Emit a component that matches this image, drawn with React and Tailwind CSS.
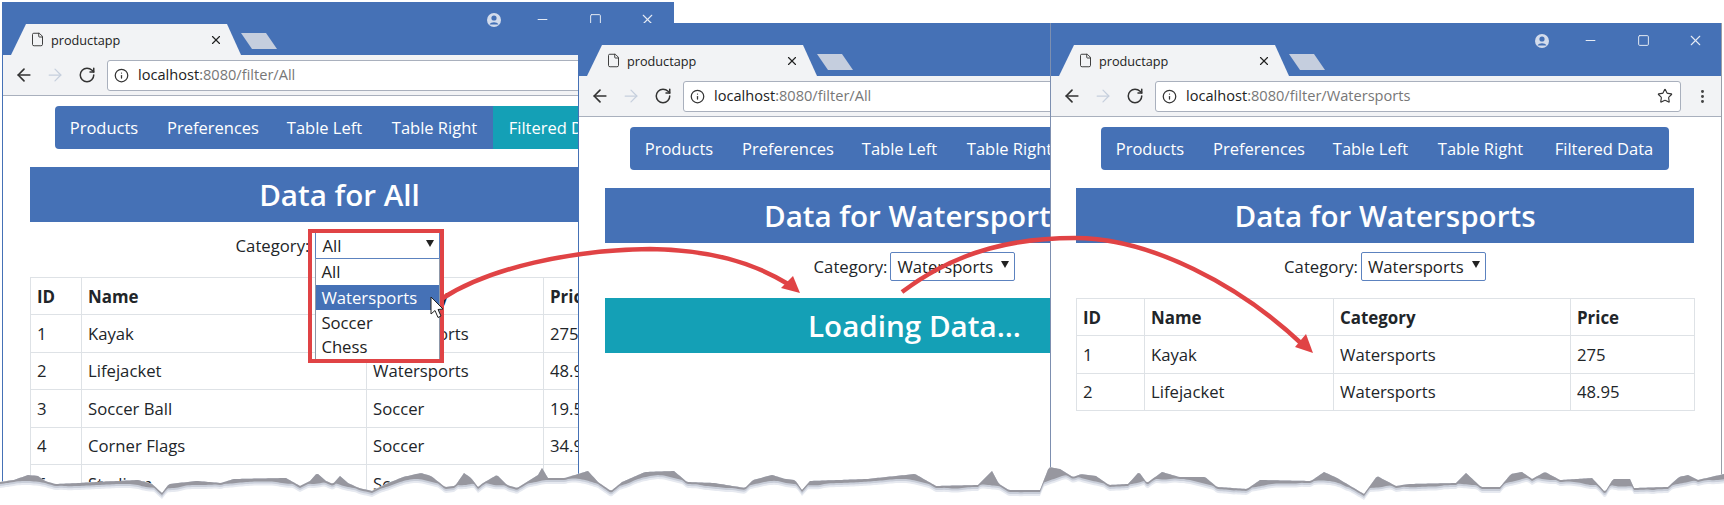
import { ArrowLeft, ArrowRight, RotateCw, Info, Star, File, X, Minus, Square, MoreVertical } from 'lucide-react';

const navItems = [
    { label: 'Products', width: 'w-[98px]' },
    { label: 'Preferences', width: 'w-[120px]' },
    { label: 'Table Left', width: 'w-[103px]' },
    { label: 'Table Right', width: 'w-[117px]' },
    { label: 'Filtered Data', width: 'w-[130px]' }
];

const rows = [
    ['1', 'Kayak', 'Watersports', '275'],
    ['2', 'Lifejacket', 'Watersports', '48.95'],
    ['3', 'Soccer Ball', 'Soccer', '19.50'],
    ['4', 'Corner Flags', 'Soccer', '34.95'],
    ['5', 'Stadium', 'Soccer', '79500']
];

// top edge of the torn paper, traced from the picture
const tearPoints = [
    [0, 482], [14, 480], [28, 475], [38, 476], [45, 481], [55, 484], [79, 483], [97, 482], [138, 480], [152, 484],
    [162, 493], [169, 484], [197, 481], [221, 483], [234, 479], [286, 478], [300, 486], [310, 481], [317, 473],
    [326, 481], [333, 484], [340, 476], [348, 483], [359, 488], [372, 491], [386, 484], [403, 477], [421, 473],
    [431, 476], [445, 487], [455, 486], [464, 473], [471, 478], [478, 487], [483, 483], [497, 475], [507, 485],
    [517, 488], [538, 475], [542, 468], [548, 478], [565, 478], [588, 471], [598, 482], [611, 491], [622, 482],
    [645, 472], [674, 471], [687, 482], [714, 483], [745, 488], [753, 480], [772, 475], [785, 479], [795, 480],
    [802, 490], [810, 481], [867, 479], [915, 474], [929, 482], [936, 486], [978, 485], [992, 471], [999, 484],
    [1009, 490], [1040, 490], [1049, 467], [1060, 469], [1073, 477], [1081, 474], [1096, 476], [1109, 485],
    [1128, 484], [1139, 472], [1147, 483], [1162, 472], [1179, 477], [1205, 477], [1217, 487], [1247, 489],
    [1260, 480], [1311, 481], [1324, 472], [1337, 478], [1364, 494], [1377, 476], [1396, 486], [1409, 484],
    [1456, 483], [1466, 473], [1481, 487], [1500, 487], [1511, 474], [1522, 472], [1532, 479], [1545, 472],
    [1560, 480], [1592, 478], [1605, 492], [1613, 479], [1630, 479], [1634, 488], [1668, 487], [1679, 477],
    [1688, 475], [1698, 480], [1724, 474]
];

const TornEdge = () => {
    // resample the edge and work out a smoothed lower line for the shadow
    const samples = [];
    let seg = 0;
    for (let x = 0; x <= 1724; x += 2) {
        while (seg < tearPoints.length - 2 && tearPoints[seg + 1][0] < x) seg++;
        const [x0, y0] = tearPoints[seg];
        const [x1, y1] = tearPoints[seg + 1];
        samples.push([x, y0 + ((y1 - y0) * (x - x0)) / (x1 - x0)]);
    }
    const smooth = samples.map(([x, y], i) => {
        const part = samples.slice(Math.max(0, i - 10), i + 11);
        const avg = part.reduce((sum, p) => sum + p[1], 0) / part.length;
        return [x, Math.max(y, avg + 1)];
    });
    const top = samples.map(p => p.join(',')).join(' ');
    const band = offset => {
        const lower = smooth.map(([x, y]) => `${x},${(y + offset).toFixed(1)}`).reverse().join(' ');
        return `${top} ${lower}`;
    };

    return (
        <svg className="absolute inset-0 z-50 pointer-events-none" width="1724" height="505">
            <polygon points={`${top} 1724,505 0,505`} fill="#ffffff" />
            <polygon points={band(6)} fill="#e6e9f0" />
            <polygon points={band(4)} fill="#c9ced9" />
            <polygon points={band(2)} fill="#97979f" />
        </svg>
    );
};

const Arrows = () => (
    <svg className="absolute inset-0 z-40 pointer-events-none" width="1724" height="505">
        <path d="M443 298 C 490 268, 570 250, 650 249 C 710 250, 752 262, 788 284" fill="none" stroke="#e04345" strokeWidth="4.5" />
        <polygon points="800,293 781,288 793,276" fill="#e04345" />
        <path d="M902 292 C 960 248, 1020 238, 1075 238 C 1150 238, 1240 285, 1303 345" fill="none" stroke="#e04345" strokeWidth="4.5" />
        <polygon points="1313,353 1295,347 1306,334" fill="#e04345" />
        <path d="M431 297 L431 314 L435 310.5 L438 317.5 L441 316 L438 309.5 L443 309 Z" fill="#ffffff" stroke="#222222" strokeWidth="1" />
    </svg>
);

const ProfileIcon = () => (
    <svg width="16" height="16" viewBox="0 0 16 16">
        <circle cx="8" cy="8" r="7" fill="#d3dcec" />
        <circle cx="8" cy="6" r="2.6" fill="#4571b6" />
        <path d="M3.5 12.5 C 5 9.5, 11 9.5, 12.5 12.5 Z" fill="#4571b6" />
    </svg>
);

const Caret = () => (
    <svg width="8" height="7" viewBox="0 0 8 7" className="shrink-0 mb-[4px]">
        <polygon points="0,0 8,0 4,7" fill="#222222" />
    </svg>
);

const BrowserChrome = ({ host, path, showStar }) => (
    <>
        {/* Title bar */}
        <div className="h-[53px] bg-[#4571b6] flex items-end relative">
            <div className="ml-2 h-[31px] w-[230px] bg-[#f2f3f5] [clip-path:polygon(0_100%,15px_0,calc(100%-14px)_0,100%_100%)] flex items-start pt-[7px] pl-[19px]">
                <File size={15} strokeWidth={1.5} className="text-[#333] mt-[1px]" />
                <span className="ml-[6px] text-[12.7px] leading-[18px] text-[#222]">productapp</span>
                <X size={14} strokeWidth={2} className="ml-[89px] mt-[2px] text-[#222]" />
            </div>
            <div className="mb-[6px] h-[16px] w-[36px] bg-[#c5cede] [clip-path:polygon(0_0,25px_0,100%_100%,11px_100%)]" />
            <div className="absolute top-[9px] left-[483px] flex items-center text-[#e6ebf4]">
                <ProfileIcon />
                <Minus size={15} strokeWidth={1.8} className="ml-[33px]" />
                <Square size={13} strokeWidth={1.8} className="ml-[39px]" />
                <X size={17} strokeWidth={1.5} className="ml-[37px]" />
            </div>
        </div>
        {/* Toolbar */}
        <div className="h-[41px] bg-[#f2f3f5] border-b border-[#a9b0bd] flex items-center pl-[11px] pr-[10px]">
            <ArrowLeft size={20} strokeWidth={2} className="text-[#333]" />
            <ArrowRight size={20} strokeWidth={1.5} className="ml-[11px] text-[#c6cfdd]" />
            <RotateCw size={18} strokeWidth={2} className="ml-[13px] text-[#333]" />
            <div className="ml-[11px] h-[31px] flex-1 min-w-0 bg-white border border-[#a9b0bd] rounded-[3px] flex items-center pl-[6px] pr-[7px]">
                <Info size={15} strokeWidth={2} className="text-[#333] shrink-0" />
                <span className="ml-[9px] text-[14.6px] text-[#777] whitespace-nowrap">
                    <span className="text-[#222]">{host}</span>:8080{path}
                </span>
                {showStar && <Star size={16} strokeWidth={1.7} className="ml-auto text-[#333]" />}
            </div>
            <MoreVertical size={17} strokeWidth={2.2} className={`ml-[13px] ${showStar ? 'text-[#444]' : 'text-transparent'}`} />
        </div>
    </>
);

const Navbar = ({ active }) => (
    <div className="mt-[10px] ml-[25px] w-[568px] h-[43px] bg-[#4571b6] rounded-[4px] overflow-hidden flex text-white text-[16.5px]">
        {navItems.map((item, i) => (
            <div key={item.label} className={`${item.width} pt-[2px] flex items-center justify-center whitespace-nowrap ${active && i === 4 ? 'bg-[#14a0b6]' : ''}`}>
                {item.label}
            </div>
        ))}
    </div>
);

const Banner = ({ text, teal }) => (
    <div className={`h-[55px] pt-[2px] flex items-center justify-center text-white text-[29.6px] font-semibold ${teal ? 'bg-[#14a0b6]' : 'bg-[#4571b6]'}`}>
        {text}
    </div>
);

const SelectBox = ({ value, wide, children }) => (
    <div className={`relative h-[29px] border border-[#5c82bf] rounded-[2px] bg-white flex items-center justify-between pl-[6px] pr-[5px] text-[16.7px] text-[#222] ${wide ? 'ml-[6px] w-[125px]' : 'ml-[3px] w-[125px]'}`}>
        <span>{value}</span>
        <Caret />
        {children}
    </div>
);

const DataTable = ({ widths, items }) => (
    <table className="mt-[17px] w-full table-fixed border-collapse text-[16.7px] text-[#212529]">
        <colgroup>
            {widths.map((w, i) => <col key={i} className={w} />)}
        </colgroup>
        <thead>
            <tr className="h-[37.4px]">
                {['ID', 'Name', 'Category', 'Price'].map(h => (
                    <th key={h} className="border border-[#dee2e6] px-[6px] pt-[1px] text-left text-[16.9px] font-bold whitespace-nowrap">{h}</th>
                ))}
            </tr>
        </thead>
        <tbody>
            {items.map(row => (
                <tr key={row[0]} className="h-[37.4px]">
                    {row.map((cell, i) => (
                        <td key={i} className="border border-[#dee2e6] px-[6px] whitespace-nowrap">{cell}</td>
                    ))}
                </tr>
            ))}
        </tbody>
    </table>
);

const OpenDropdown = () => (
    <>
        <div className="absolute top-[26px] left-[-1px] w-[125px] h-[102px] bg-white border border-[#8d97a8] border-t-[#5c82bf] text-[16.7px] z-10">
            <div className="h-[26px] leading-[26px] pl-[5px]">All</div>
            <div className="h-[25px] leading-[25px] pl-[5px] bg-[#4571b6] text-white">Watersports</div>
            <div className="h-[25px] leading-[25px] pl-[5px]">Soccer</div>
            <div className="h-[24px] leading-[24px] pl-[5px]">Chess</div>
        </div>
        <div className="absolute top-[-3px] left-[-8px] w-[136px] h-[134px] border-[4px] border-[#e04345] z-20" />
    </>
);

const Window = ({ className, bodyClass, host = 'localhost', path, showStar, children }) => (
    <div className={`absolute w-[672px] bg-white overflow-hidden ${className}`}>
        <BrowserChrome host={host} path={path} showStar={showStar} />
        <div className={bodyClass}>{children}</div>
    </div>
);

const CategoryRow = ({ className = '', children }) => (
    <div className={`mt-[9px] h-[29px] flex items-center justify-center text-[16.7px] text-[#212529] ${className}`}>
        <span>Category:</span>
        {children}
    </div>
);

export default function App() {
    return (
        <div className="relative w-[1724px] h-[505px] bg-white overflow-hidden [font-family:'Open_Sans',sans-serif]">
            <Window className="left-[2px] top-[2px] h-[503px] z-10 border-l border-[#4571b6]" bodyClass="pl-[27px] pr-[25px]" path="/filter/All">
                <Navbar active />
                <div className="mt-[18px]"><Banner text="Data for All" /></div>
                <CategoryRow className="pr-[3px]">
                    <SelectBox value="All" wide><OpenDropdown /></SelectBox>
                </CategoryRow>
                <DataTable widths={['w-[51px]', 'w-[285px]', 'w-[177px]', 'w-[105px]']} items={rows} />
            </Window>

            <Window className="left-[578px] top-[23px] h-[482px] z-20 border-l border-[#4571b6]" bodyClass="pl-[26px] pr-[26px]" path="/filter/All">
                <Navbar />
                <div className="mt-[18px]"><Banner text="Data for Watersports" /></div>
                <CategoryRow>
                    <SelectBox value="Watersports" />
                </CategoryRow>
                <div className="mt-[17px]"><Banner text="Loading Data..." teal /></div>
            </Window>

            <Window className="left-[1050px] top-[23px] h-[482px] z-30 border-l border-r border-l-[#7d8fb0] border-r-[#9a9ea8]" bodyClass="pl-[25px] pr-[27px]" path="/filter/Watersports" showStar>
                <Navbar />
                <div className="mt-[18px]"><Banner text="Data for Watersports" /></div>
                <CategoryRow>
                    <SelectBox value="Watersports" />
                </CategoryRow>
                <DataTable widths={['w-[68px]', 'w-[189px]', 'w-[237px]', 'w-[124px]']} items={rows.slice(0, 2)} />
            </Window>

            <Arrows />
            <TornEdge />
        </div>
    );
}
